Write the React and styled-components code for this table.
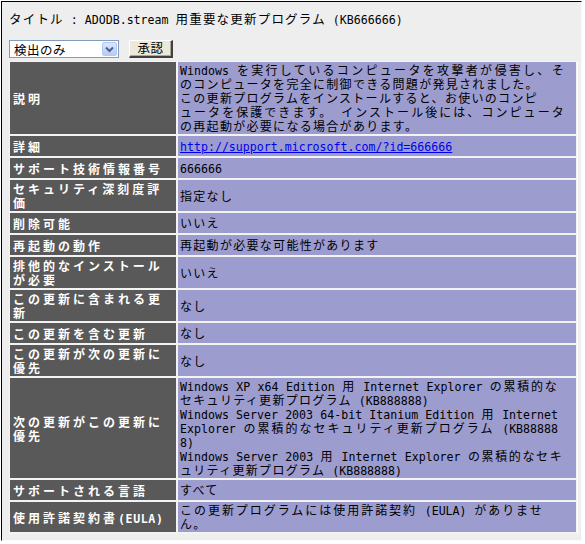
import React from 'react';
import styled, { createGlobalStyle } from 'styled-components';

const GlobalStyle = createGlobalStyle`
  html, body {
    margin: 0;
    padding: 0;
    background: #ffffff;
  }
  body {
    font-family: "Noto Sans CJK JP", "Liberation Sans", sans-serif;
  }
`;

const Frame = styled.div`
  box-sizing: border-box;
  width: 581px;
  height: 540px;
  margin: 1px 0 0 1px;
  border-top: 1px solid #000000;
  border-left: 1px solid #000000;
  border-right: 1px solid #fbfbfb;
  border-bottom: 1px solid #fbfbfb;
  background: #eeeeee;
  padding: 9px 0 0 7px;
  display: flex;
  flex-direction: column;
`;

const Title = styled.div`
  height: 16px;
  line-height: 16px;
  font-size: 12.5px;
  letter-spacing: 1.2px;
  color: #000000;
  white-space: nowrap;
`;

const Latin = styled.span`
  font-family: "DejaVu Sans Mono", "Liberation Mono", monospace;
  font-size: 11.6px;
  letter-spacing: ${(p) => p.$ls || 0}px;
`;

const Controls = styled.div`
  display: flex;
  align-items: center;
  gap: 10px;
  margin-top: 13px;
  height: 18px;
`;

const SelectBox = styled.div`
  box-sizing: border-box;
  width: 110px;
  height: 18px;
  border: 1px solid #7f9db9;
  background: #ffffff;
  display: flex;
  align-items: center;
  justify-content: space-between;
  padding: 0 1px 0 4px;
  font-size: 12.5px;
  letter-spacing: 0.5px;
  color: #000000;
`;

const ArrowButton = styled.div`
  box-sizing: border-box;
  width: 15px;
  height: 14px;
  border: 1px solid #b4c8f6;
  border-radius: 2px;
  background: linear-gradient(#dce6fd, #b6cbf9);
  display: flex;
  align-items: center;
  justify-content: center;
`;

const Button = styled.div`
  box-sizing: border-box;
  width: 44px;
  height: 18px;
  background: #ece9d8;
  border-top: 1px solid #ffffff;
  border-left: 1px solid #ffffff;
  border-right: 2px solid #404040;
  border-bottom: 2px solid #404040;
  box-shadow: inset -1px -1px 0 #aca899;
  display: flex;
  align-items: center;
  justify-content: center;
  font-size: 12.5px;
  letter-spacing: 0.5px;
  line-height: 1;
  color: #000000;
`;

const Table = styled.div`
  box-sizing: border-box;
  width: 569px;
  margin-top: 3px;
  display: grid;
  grid-template-columns: 166px 1fr;
  grid-auto-rows: minmax(20px, auto);
  gap: 2px;
  padding: 1px 1px 2px 1px;
  background: #f3f3f3;
  border-right: 1px solid #ffffff;
`;

const Cell = styled.div`
  padding: 1px 2px;
  display: flex;
  flex-direction: column;
  justify-content: center;
`;

const LabelCell = styled(Cell)`
  background: #595959;
  color: #ffffff;
  font-weight: bold;
  font-size: 12px;
  letter-spacing: 3px;
  padding: 2px 2px 1px 3px;
`;

const ValueCell = styled(Cell)`
  background: #9c9ccf;
  color: #000000;
  font-size: 12px;
  letter-spacing: 1.3px;
`;

const Line = styled.span`
  display: block;
  height: 14px;
  line-height: 14px;
  white-space: nowrap;
  width: ${(p) => (p.$justify ? `${p.$justify}px` : 'auto')};
  text-align: ${(p) => (p.$justify ? 'justify' : 'left')};
  text-align-last: ${(p) => (p.$justify ? 'justify' : 'auto')};
  text-justify: inter-character;
`;

const Link = styled.a`
  color: #0000ee;
  text-decoration: underline;
`;

function Mixed({ text, ls }) {
  const parts = text.split(/([\x20-\x7e]+)/);
  return parts.map((p, i) =>
    i % 2 ? <Latin key={i} $ls={ls}>{p}</Latin> : <React.Fragment key={i}>{p}</React.Fragment>
  );
}

// a value line is either plain text or [text, justified width]
const rows = [
  {
    label: ['説明'],
    value: [
      ['Windows を実行しているコンピュータを攻撃者が侵害し、そ', 385],
      'のコンピュータを完全に制御できる問題が発見されました。',
      'この更新プログラムをインストールすると、お使いのコンピ',
      ['ュータを保護できます。 インストール後には、コンピュータ', 385],
      'の再起動が必要になる場合があります。',
    ],
  },
  { label: ['詳細'], link: 'http://support.microsoft.com/?id=666666' },
  { label: ['サポート技術情報番号'], value: ['666666'] },
  { label: ['セキュリティ深刻度評', '価'], value: ['指定なし'] },
  { label: ['削除可能'], value: ['いいえ'] },
  { label: ['再起動の動作'], value: ['再起動が必要な可能性があります'] },
  { label: ['排他的なインストール', 'が必要'], value: ['いいえ'] },
  { label: ['この更新に含まれる更', '新'], value: ['なし'] },
  { label: ['この更新を含む更新'], value: ['なし'] },
  { label: ['この更新が次の更新に', '優先'], value: ['なし'] },
  {
    label: ['次の更新がこの更新に', '優先'],
    value: [
      ['Windows XP x64 Edition 用 Internet Explorer の累積的な', 378],
      'セキュリティ更新プログラム (KB888888)',
      ['Windows Server 2003 64-bit Itanium Edition 用 Internet', 378],
      ['Explorer の累積的なセキュリティ更新プログラム (KB88888', 378],
      '8)',
      ['Windows Server 2003 用 Internet Explorer の累積的なセキ', 383],
      'ュリティ更新プログラム (KB888888)',
    ],
  },
  { label: ['サポートされる言語'], value: ['すべて'] },
  {
    label: ['使用許諾契約書(EULA)'],
    value: [['この更新プログラムには使用許諾契約 (EULA) がありませ', 363], 'ん。'],
  },
];

function Chevron() {
  return (
    <svg width="9" height="7" viewBox="0 0 9 7">
      <path d="M1 1.5 L4.5 5 L8 1.5" fill="none" stroke="#4d6185" strokeWidth="2" />
    </svg>
  );
}

export default function App() {
  return (
    <>
      <GlobalStyle />
      <Frame>
        <Title>
          <Mixed text="タイトル : ADODB.stream 用重要な更新プログラム (KB666666)" />
        </Title>
        <Controls>
          <SelectBox>
            <span>検出のみ</span>
            <ArrowButton>
              <Chevron />
            </ArrowButton>
          </SelectBox>
          <Button>承認</Button>
        </Controls>
        <Table>
          {rows.map((row, i) => (
            <React.Fragment key={i}>
              <LabelCell>
                {row.label.map((l, j) => (
                  <Line key={j}>
                    <Mixed text={l} ls={0.6} />
                  </Line>
                ))}
              </LabelCell>
              <ValueCell>
                {row.link ? (
                  <Line>
                    <Link href={row.link}>
                      <Latin>{row.link}</Latin>
                    </Link>
                  </Line>
                ) : (
                  row.value.map((v, j) => {
                    const [text, justify] = Array.isArray(v) ? v : [v, 0];
                    return (
                      <Line key={j} $justify={justify}>
                        <Mixed text={text} />
                      </Line>
                    );
                  })
                )}
              </ValueCell>
            </React.Fragment>
          ))}
        </Table>
      </Frame>
    </>
  );
}
